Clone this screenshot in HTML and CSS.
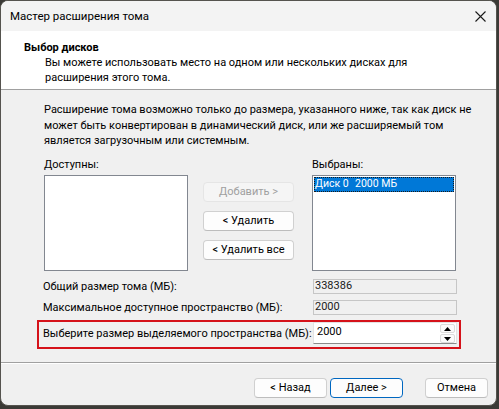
FILE: index.html
```html
<!DOCTYPE html>
<html lang="ru">
<head>
<meta charset="utf-8">
<title>Мастер расширения тома</title>
<link rel="stylesheet" href="styles.css">
</head>
<body>
<div class="window">
  <div class="titlebar">
    <span class="title">Мастер расширения тома</span>
    <span class="close">
      <svg width="11" height="11" viewBox="0 0 11 11"><path d="M0.5 0.5 L10.5 10.5 M10.5 0.5 L0.5 10.5" stroke="#1a1a1a" stroke-width="1.1" fill="none"/></svg>
    </span>
  </div>
  <div class="header">
    <div class="h-title">Выбор дисков</div>
    <div class="h-desc">Вы можете использовать место на одном или нескольких дисках для<br>расширения этого тома.</div>
  </div>
  <div class="content">
    <p class="intro">Расширение тома возможно только до размера, указанного ниже, так как диск не<br>может быть конвертирован в динамический диск, или же расширяемый том<br>является загрузочным или системным.</p>
    <div class="pickers">
      <div class="col">
        <div class="lbl">Доступны:</div>
        <div class="listbox"></div>
      </div>
      <div class="mid">
        <button class="btn disabled">Добавить &gt;</button>
        <button class="btn">&lt; Удалить</button>
        <button class="btn">&lt; Удалить все</button>
      </div>
      <div class="col right">
        <div class="lbl">Выбраны:</div>
        <div class="listbox">
          <div class="item sel"><span class="c1">Диск 0</span><span>2000 МБ</span></div>
        </div>
      </div>
    </div>
    <div class="rows">
      <div class="row r1">
        <span class="rlabel">Общий размер тома (МБ):</span>
        <span class="field">338386</span>
      </div>
      <div class="row r2">
        <span class="rlabel">Максимальное доступное пространство (МБ):</span>
        <span class="field">2000</span>
      </div>
      <div class="row hl">
        <span class="rlabel">Выберите размер выделяемого пространства (МБ):</span>
        <span class="spin">
          <span class="spin-val">2000</span>
          <span class="spin-btns">
            <span class="sb"><svg width="7" height="4" viewBox="0 0 7 4"><path d="M0 4 L3.5 0 L7 4 Z" fill="#000"/></svg></span>
            <span class="sb"><svg width="7" height="4" viewBox="0 0 7 4"><path d="M0 0 L3.5 4 L7 0 Z" fill="#000"/></svg></span>
          </span>
        </span>
      </div>
    </div>
  </div>
  <div class="footer">
    <button class="btn fb">&lt; Назад</button>
    <button class="btn fb default">Далее &gt;</button>
    <button class="btn fb cancel">Отмена</button>
  </div>
</div>
</body>
</html>
```
FILE: styles.css
```css
html, body {
  margin: 0;
  padding: 0;
}
body {
  background: #3b3a36;
  width: 499px;
  height: 409px;
  overflow: hidden;
  font-family: Roboto, "Liberation Sans", sans-serif;
  font-size: 11px;
  color: #000;
}
.window {
  box-sizing: border-box;
  width: 497px;
  height: 406px;
  border: 1px solid #55534e;
  border-radius: 8px 8px 8px 8px;
  background: #f0f0f0;
  overflow: hidden;
  display: flex;
  flex-direction: column;
  white-space: nowrap;
}
.titlebar {
  height: 30px;
  flex: none;
  display: flex;
  align-items: center;
  justify-content: space-between;
  background: #f3f3f3;
  padding: 0 8px 0 9px;
}
.title {
  font-size: 11.5px;
  line-height: 15px;
  padding-top: 1px;
}
.close {
  display: flex;
  width: 11px;
  height: 11px;
  margin-right: 2px;
}
.header {
  flex: none;
  box-sizing: border-box;
  height: 59px;
  background: #fff;
  border-bottom: 1px solid #a0a0a0;
  padding: 9px 0 0 23px;
  line-height: 15px;
}
.h-title {
  font-weight: bold;
}
.h-desc {
  padding-left: 21px;
}
.content {
  flex: none;
  box-sizing: border-box;
  height: 273px;
  border-bottom: 1px solid #a0a0a0;
  padding: 0;
}
.intro {
  margin: 0;
  padding: 12px 0 0 43px;
  line-height: 15.5px;
}
.pickers {
  display: flex;
  padding: 8px 0 0 43px;
}
.col {
  width: 144px;
  display: flex;
  flex-direction: column;
}
.col.right {
  margin-left: 18px;
}
.lbl {
  line-height: 15px;
  margin-bottom: 3px;
}
.listbox {
  box-sizing: border-box;
  height: 96px;
  background: #fff;
  border: 1px solid #828790;
  padding: 1px;
}
.item {
  display: flex;
  height: 15px;
  line-height: 14px;
  padding-left: 1px;
  box-sizing: border-box;
  font-size: 10.5px;
}
.item.sel {
  background: #0078d7;
  color: #fff;
  outline: 1px dotted #1a1a1a;
  outline-offset: -1px;
}
.c1 {
  width: 40px;
  flex: none;
}
.mid {
  display: flex;
  flex-direction: column;
  gap: 9px;
  width: 91px;
  margin-left: 15px;
  padding-top: 25px;
}
.btn {
  box-sizing: border-box;
  height: 20px;
  padding: 0;
  background: #fdfdfd;
  border: 1px solid #d0d0d0;
  border-bottom-color: #bdbdbd;
  border-radius: 4px;
  font-family: inherit;
  font-size: 11px;
  line-height: 16px;
  color: #000;
}
.btn.disabled {
  background: #f5f5f5;
  border-color: #e5e5e5;
  color: #a0a0a0;
}
.rows {
  padding: 8px 0 0 36px;
  display: flex;
  flex-direction: column;
}
.row {
  display: flex;
  align-items: center;
  padding-left: 6px;
}
.rlabel {
  width: 270px;
  line-height: 15px;
}
.field {
  box-sizing: border-box;
  width: 144px;
  height: 15px;
  border: 1px solid #c6c6c6;
  line-height: 12px;
  padding-left: 1px;
  color: #1a1a1a;
}
.r2 {
  margin-top: 6px;
}
.hl {
  box-sizing: border-box;
  margin-top: 5px;
  width: 424px;
  height: 29px;
  border: 2px solid #d5121a;
  padding-left: 4px;
  padding-bottom: 2px;
}
.spin {
  box-sizing: border-box;
  width: 144px;
  height: 22px;
  background: #fff;
  border: 1px solid #e3e3e3;
  border-bottom: 1px solid #8a8a8a;
  display: flex;
  justify-content: space-between;
}
.spin-val {
  padding-left: 3px;
  line-height: 18px;
}
.spin-btns {
  display: flex;
  flex-direction: column;
  gap: 1px;
  padding: 1px 1px 0 0;
}
.sb {
  box-sizing: border-box;
  width: 15px;
  height: 9px;
  border: 1px solid #dcdcdc;
  border-radius: 2px;
  background: #fbfbfb;
  display: flex;
  align-items: center;
  justify-content: center;
}
.footer {
  flex: 1;
  display: flex;
  align-items: flex-start;
  padding: 14px 0 0 253px;
  border-top: 1px solid #fff;
}
.fb {
  width: 73px;
  height: 20px;
  margin-right: 3px;
}
.fb.default {
  border: 1px solid #0067c0;
}
.fb.cancel {
  width: 63px;
  margin-left: 19px;
}
```
